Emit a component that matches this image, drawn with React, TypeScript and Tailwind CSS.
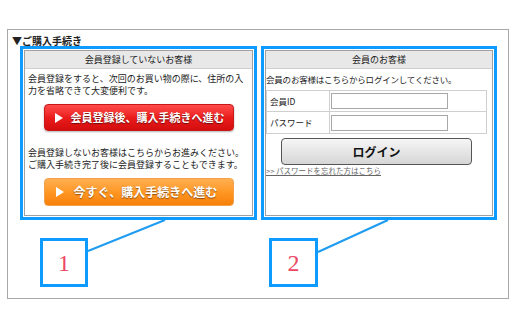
import React from "react";

function Arrow({ className }: { className?: string }) {
  return (
    <svg viewBox="0 0 8 10" className={className} fill="currentColor">
      <polygon points="0,0 8,5 0,10" />
    </svg>
  );
}

export default function App() {
  return (
    <div className="w-[514px] h-[329px] bg-white text-[#222] font-['Noto_Sans_CJK_JP','Noto_Sans',sans-serif] pt-[29px] pl-[7px]">
      {/* Outer panel */}
      <div className="relative w-[502px] h-[270px] border border-[#a8a8a8]">
        {/* Connector lines for the annotations */}
        <svg className="absolute inset-0 w-full h-full pointer-events-none" viewBox="0 0 500 268">
          <line x1="80" y1="221" x2="157" y2="190" stroke="#1f9cf2" strokeWidth="2" />
          <line x1="310" y1="222" x2="380" y2="190" stroke="#1f9cf2" strokeWidth="2" />
        </svg>

        <p className="pl-[4px] pt-[4px] h-[20px] text-[10px] font-bold leading-[14px]">▼ご購入手続き</p>

        <div className="flex gap-[12px] pl-[16px]">
          {/* Guest box */}
          <div className="w-[229px] h-[166px] border border-[#a0a0a0] outline-3 outline-solid outline-[#0d9bff] outline-offset-1 flex flex-col">
            <div className="h-[18px] bg-[#e8e8e8] border-b border-[#cfcfcf] text-center text-[9px] leading-[18px]">
              会員登録していないお客様
            </div>
            <p className="px-[3px] pt-[4px] text-[9px] leading-[12px]">
              会員登録をすると、次回のお買い物の際に、住所の入力を省略できて大変便利です。
            </p>
            <div className="flex justify-center mt-[7px]">
              <button className="w-[190px] h-[27px] flex items-center pl-[10px] gap-[8px] rounded-[4px] border border-[#c81818] bg-gradient-to-b from-[#ff4a4a] via-[#ea1c1c] to-[#d40c0c] text-white text-[11px] font-bold [text-shadow:0_1px_1px_rgba(0,0,0,0.5)] shadow-[0_1px_2px_rgba(0,0,0,0.3)]">
                <Arrow className="w-[8px] h-[10px]" />
                会員登録後、購入手続きへ進む
              </button>
            </div>
            <p className="px-[3px] pt-[16px] text-[9px] leading-[12px]">
              会員登録しないお客様はこちらからお進みください。<br />
              ご購入手続き完了後に会員登録することもできます。
            </p>
            <div className="flex justify-center mt-[7px]">
              <button className="w-[190px] h-[28px] flex items-center pl-[11px] gap-[10px] rounded-[4px] border border-[#f3a04a] bg-gradient-to-b from-[#ffb050] via-[#ff9722] to-[#f78008] text-white text-[12px] font-bold [text-shadow:0_1px_1px_rgba(0,0,0,0.45)]">
                <Arrow className="w-[8px] h-[10px]" />
                今すぐ、購入手続きへ進む
              </button>
            </div>
          </div>

          {/* Member box */}
          <div className="w-[228px] h-[166px] border border-[#a0a0a0] outline-3 outline-solid outline-[#0d9bff] outline-offset-1 flex flex-col">
            <div className="h-[18px] bg-[#e8e8e8] border-b border-[#cfcfcf] text-center text-[9px] leading-[18px]">
              会員のお客様
            </div>
            <p className="pt-[4px] text-[8.5px] leading-[12px] tracking-[-0.2px]">
              会員のお客様はこちらからログインしてください。
            </p>
            <div className="w-[221px] mt-[5px]">
              <table className="w-full border-collapse border border-[#cfcfcf] text-[8.5px]">
                <tbody>
                  <tr className="h-[21px]">
                    <td className="w-[63px] border border-[#cfcfcf] pl-[3px]">会員ID</td>
                    <td className="border border-[#cfcfcf] pl-[1px]">
                      <div className="w-[117px] h-[16px] border border-[#a8a8a8] bg-white" />
                    </td>
                  </tr>
                  <tr className="h-[22px]">
                    <td className="border border-[#cfcfcf] pl-[3px]">パスワード</td>
                    <td className="border border-[#cfcfcf] pl-[1px]">
                      <div className="w-[117px] h-[16px] border border-[#a8a8a8] bg-white" />
                    </td>
                  </tr>
                </tbody>
              </table>
              <div className="flex justify-center mt-[4px]">
                <button className="w-[191px] h-[27px] rounded-[4px] border border-[#555] bg-gradient-to-b from-[#f6f6f6] to-[#d6d6d6] text-[12px] font-bold text-[#111]">
                  ログイン
                </button>
              </div>
              <a className="block mt-[1px] text-[7.5px] leading-[10px] text-[#666] underline">
                &gt;&gt; パスワードを忘れた方はこちら
              </a>
            </div>
          </div>
        </div>

        {/* Annotation numbers */}
        <div className="flex mt-[22px] pl-[32px] gap-[181px]">
          <div className="w-[48px] h-[49px] border-[3px] border-[#0d9bff] bg-white flex items-center justify-center font-['Liberation_Serif',serif] text-[24px] text-[#ec4763]">
            1
          </div>
          <div className="w-[49px] h-[49px] border-[3px] border-[#0d9bff] bg-white flex items-center justify-center font-['Liberation_Serif',serif] text-[24px] text-[#ec4763]">
            2
          </div>
        </div>
      </div>
    </div>
  );
}
